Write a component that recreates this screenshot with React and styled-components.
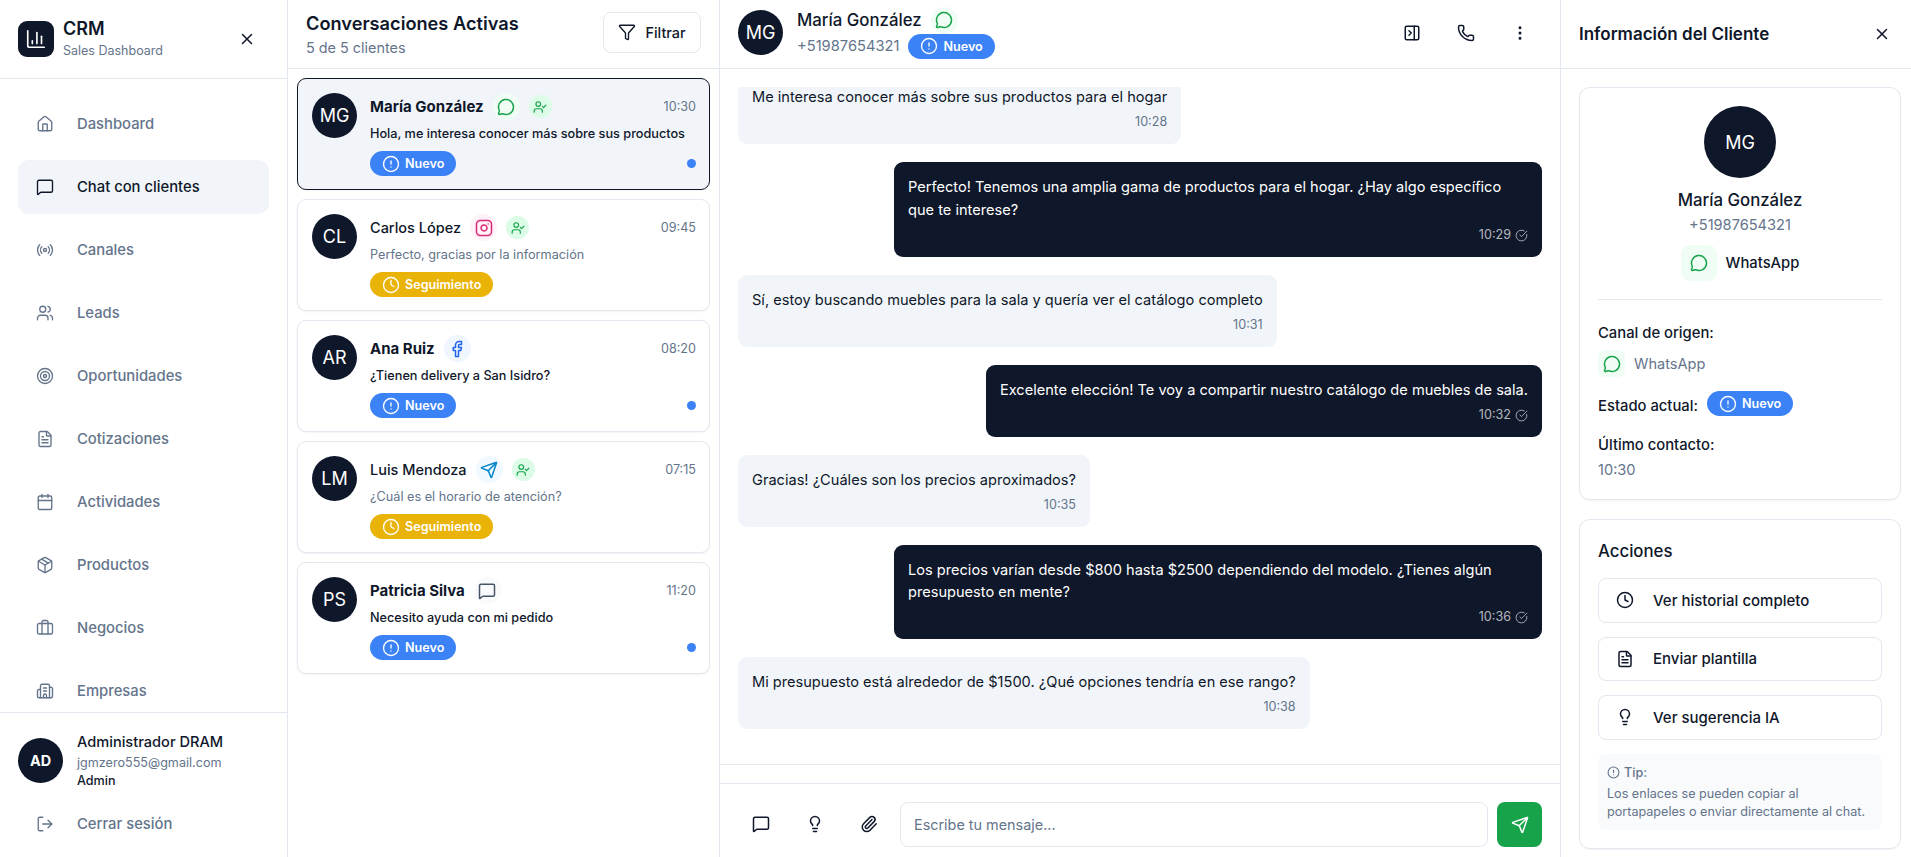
import React from 'react'
import styled, { createGlobalStyle } from 'styled-components'
import {
  House, MessageSquare, Radio, Users, Target, FileText, Calendar, Package, Briefcase, Building2,
  LogOut, X, ChartColumn, Funnel, MessageCircle, UserCheck, Instagram, Facebook, Send,
  CircleAlert, Clock, PanelRightClose, Phone, EllipsisVertical, CircleCheckBig, Lightbulb, Paperclip,
} from 'lucide-react'

const GlobalStyle = createGlobalStyle`
  * { box-sizing: border-box; }
  html, body { margin: 0; padding: 0; height: 100%; }
  body { font-family: Inter, "Noto Sans", sans-serif; color: #0f172a; background: #fff; }
`

const Page = styled.div`
  display: flex;
  width: 100vw;
  height: 100vh;
  overflow: hidden;
`

/* sidebar */
const Sidebar = styled.aside`
  width: 288px;
  flex-shrink: 0;
  display: flex;
  flex-direction: column;
  border-right: 1px solid #e2e8f0;
`
const SideHead = styled.div`
  height: 79px;
  flex-shrink: 0;
  padding: 0 31px 0 18px;
  display: flex;
  align-items: center;
  border-bottom: 1px solid #e2e8f0;
`
const Logo = styled.div`
  width: 36px;
  height: 36px;
  border-radius: 9px;
  background: #0f172a;
  color: #fff;
  display: flex;
  align-items: center;
  justify-content: center;
  margin-right: 9px;
`
const Brand = styled.div`
  flex: 1;
  font-size: 18px;
  font-weight: 600;
  line-height: 24px;
`
const BrandSub = styled.div`
  font-size: 12.5px;
  font-weight: 400;
  line-height: 20px;
  color: #64748b;
`
const IconButton = styled.button`
  border: 0;
  padding: 0;
  background: none;
  color: #0f172a;
  display: flex;
  align-items: center;
  justify-content: center;
  width: ${p => p.$size || 36}px;
  height: ${p => p.$size || 36}px;
`
const Nav = styled.nav`
  flex: 1;
  min-height: 0;
  overflow: hidden;
  padding: 18px 18px 0;
  display: flex;
  flex-direction: column;
  gap: 9px;
`
const NavItem = styled.div`
  height: 54px;
  flex-shrink: 0;
  display: flex;
  align-items: center;
  gap: 23px;
  padding-left: 18px;
  border-radius: 11px;
  font-size: 14.8px;
  font-weight: 500;
  color: ${p => (p.$active ? '#0f172a' : '#64748b')};
  background: ${p => (p.$active ? '#f1f5f9' : 'transparent')};
`
const SideFoot = styled.div`
  flex-shrink: 0;
  height: 145px;
  border-top: 1px solid #e2e8f0;
  padding: 18px 18px 0;
`
const UserRow = styled.div`
  display: flex;
  align-items: center;
  gap: 14px;
`
const Avatar = styled.div`
  width: ${p => p.$size || 45}px;
  height: ${p => p.$size || 45}px;
  border-radius: 50%;
  flex-shrink: 0;
  background: #0f172a;
  color: #fff;
  display: flex;
  align-items: center;
  justify-content: center;
  font-size: ${p => p.$font || 18}px;
  font-weight: ${p => p.$weight || 400};
`
const UserName = styled.div`
  font-size: 14.6px;
  font-weight: 500;
  line-height: 22px;
`
const UserMail = styled.div`
  font-size: 12.6px;
  line-height: 20px;
  color: #64748b;
`
const UserRole = styled.div`
  font-size: 12.6px;
  font-weight: 500;
  line-height: 16px;
`
const Logout = styled(NavItem)`
  height: 36px;
  margin-top: 17px;
`

/* conversation list */
const ListPanel = styled.section`
  width: 432px;
  flex-shrink: 0;
  display: flex;
  flex-direction: column;
  border-right: 1px solid #e2e8f0;
`
const PanelHead = styled.header`
  height: 69px;
  flex-shrink: 0;
  display: flex;
  align-items: center;
  border-bottom: 1px solid #e2e8f0;
  padding: ${p => p.$pad || '0 18px'};
`
const ListTitle = styled.h1`
  margin: 0;
  padding-top: 1px;
  font-size: 18.2px;
  font-weight: 600;
  line-height: 27px;
`
const ListSub = styled.div`
  font-size: 14.4px;
  line-height: 22px;
  color: #64748b;
`
const FilterButton = styled.button`
  margin-left: auto;
  margin-bottom: 4px;
  width: 98px;
  height: 41px;
  border: 1px solid #e2e8f0;
  border-radius: 8px;
  background: #fff;
  color: #0f172a;
  font: 500 14.4px Inter, sans-serif;
  display: flex;
  align-items: center;
  justify-content: center;
  gap: 9px;
`
const Cards = styled.div`
  flex: 1;
  padding: 9px;
  display: flex;
  flex-direction: column;
  gap: 9px;
`
const Card = styled.article`
  height: 112px;
  display: flex;
  gap: 13px;
  padding: 14px 13px 13px 14px;
  border-radius: 9px;
  border: 1px solid ${p => (p.$active ? '#0f172a' : '#e2e8f0')};
  background: ${p => (p.$active ? '#f1f5f9' : '#fff')};
  box-shadow: 0 1px 2px rgba(15, 23, 42, 0.05);
`
const CardBody = styled.div`
  flex: 1;
  min-width: 0;
`
const CardTop = styled.div`
  display: flex;
  align-items: center;
  gap: 9px;
  height: 27px;
`
const CardName = styled.span`
  font-size: ${p => (p.$unread ? 15 : 14.5)}px;
  font-weight: ${p => (p.$unread ? 700 : 500)};
`
const Time = styled.span`
  margin-left: auto;
  font-size: 12.6px;
  color: #64748b;
`
const Circle = styled.span`
  width: ${p => p.$size || 27}px;
  height: ${p => p.$size || 27}px;
  border-radius: 50%;
  flex-shrink: 0;
  display: flex;
  align-items: center;
  justify-content: center;
  background: ${p => p.$bg};
  color: ${p => p.$fg};
`
const Square = styled(Circle)`
  border-radius: ${p => p.$radius || 7}px;
`
const Preview = styled.div`
  margin-top: 4px;
  font-size: 12.7px;
  line-height: 20px;
  font-weight: ${p => (p.$unread ? 500 : 400)};
  color: ${p => (p.$unread ? '#0f172a' : '#64748b')};
  white-space: nowrap;
`
const CardBottom = styled.div`
  margin-top: 7px;
  display: flex;
  align-items: center;
  justify-content: space-between;
`
const Badge = styled.span`
  display: inline-flex;
  align-items: center;
  gap: 5px;
  height: 25px;
  padding: 0 12px;
  border-radius: 999px;
  color: #fff;
  font-size: 12.6px;
  font-weight: 600;
  background: ${p => (p.$kind === 'follow' ? '#eab308' : '#3b82f6')};
`
const Dot = styled.span`
  width: 9px;
  height: 9px;
  border-radius: 50%;
  background: #3b82f6;
`

/* chat */
const ChatPanel = styled.section`
  width: 841px;
  flex-shrink: 0;
  display: flex;
  flex-direction: column;
  border-right: 1px solid #e2e8f0;
`
const ChatTitle = styled.div`
  margin-left: 14px;
  flex: 1;
`
const ChatNameRow = styled.div`
  display: flex;
  align-items: center;
  gap: 9px;
  height: 27px;
  font-size: 16.8px;
  font-weight: 500;
`
const ChatPhoneRow = styled.div`
  display: flex;
  align-items: center;
  gap: 9px;
  font-size: 14.7px;
  color: #64748b;
  height: 25px;
`
const ChatActions = styled.div`
  display: flex;
  gap: 18px;
  margin-right: 4px;
`
const Messages = styled.div`
  flex: 1;
  min-height: 0;
  margin-top: 18px;
  padding: 0 18px 35px;
  overflow: hidden;
  display: flex;
  flex-direction: column;
  justify-content: flex-end;
  gap: 18px;
  border-bottom: 1px solid #e2e8f0;
`
const Bubble = styled.div`
  flex-shrink: 0;
  max-width: 648px;
  align-self: ${p => (p.$mine ? 'flex-end' : 'flex-start')};
  padding: 14px 14px 11.5px;
  border-radius: 9px;
  font-size: 14.6px;
  line-height: 22.5px;
  background: ${p => (p.$mine ? '#0f172a' : '#f1f5f9')};
  color: ${p => (p.$mine ? '#fff' : '#0f172a')};
`
const BubbleMeta = styled.div`
  display: flex;
  align-items: center;
  justify-content: flex-end;
  gap: 4px;
  margin-top: 4px;
  height: 20px;
  font-size: 12.6px;
  color: ${p => (p.$mine ? 'rgba(255, 255, 255, 0.7)' : '#64748b')};
`
const Strip = styled.div`
  height: 19px;
  flex-shrink: 0;
  border-bottom: 1px solid #e2e8f0;
`
const Composer = styled.div`
  height: 73px;
  flex-shrink: 0;
  display: flex;
  align-items: flex-start;
  padding: 18px 18px 0 23px;
`
const ComposerTools = styled.div`
  display: flex;
  width: 157px;
  flex-shrink: 0;
  gap: 18px;
  padding-top: 4px;
  & > button { flex-shrink: 0; }
`
const Input = styled.input`
  flex: 1;
  min-width: 0;
  height: 45px;
  border: 1px solid #e2e8f0;
  border-radius: 8px;
  padding: 0 13px;
  font: 400 14.4px Inter, sans-serif;
  &::placeholder { color: #64748b; }
`
const SendButton = styled.button`
  width: 45px;
  height: 45px;
  margin-left: 9px;
  border: 0;
  border-radius: 8px;
  background: #16a34a;
  color: #fff;
  display: flex;
  align-items: center;
  justify-content: center;
`

/* client info */
const InfoPanel = styled.aside`
  flex: 1;
  min-width: 0;
  display: flex;
  flex-direction: column;
`
const InfoTitle = styled.h2`
  margin: 0;
  flex: 1;
  font-size: 17px;
  font-weight: 600;
`
const InfoBody = styled.div`
  padding: 18px 10px 0 18px;
  display: flex;
  flex-direction: column;
  gap: 19px;
`
const InfoCard = styled.div`
  border: 1px solid #e2e8f0;
  border-radius: 11px;
  padding: 18px;
  box-shadow: 0 1px 2px rgba(15, 23, 42, 0.05);
`
const Center = styled.div`
  display: flex;
  flex-direction: column;
  align-items: center;
  padding-bottom: 18px;
  border-bottom: 1px solid #e2e8f0;
`
const ClientName = styled.div`
  margin-top: 9px;
  font-size: 16.8px;
  font-weight: 500;
  line-height: 27px;
`
const ClientPhone = styled.div`
  font-size: 14.6px;
  line-height: 22px;
  color: #64748b;
`
const ChannelRow = styled.div`
  display: flex;
  align-items: center;
  gap: 9px;
  margin-top: 9px;
  font-size: 14.8px;
  font-weight: 500;
`
const Field = styled.div`
  margin-top: ${p => p.$top || 0}px;
`
const Label = styled.div`
  font-size: 14.8px;
  font-weight: 500;
  line-height: 22px;
`
const FieldValue = styled.div`
  display: flex;
  align-items: center;
  gap: 9px;
  margin-top: ${p => p.$top || 0}px;
  font-size: 14.6px;
  line-height: 22px;
  color: #64748b;
`
const StateRow = styled.div`
  display: flex;
  align-items: flex-start;
  gap: 9px;
  margin-top: 14px;
`
const StateLabel = styled(Label)`
  margin-top: 4px;
`
const ActionsTitle = styled.h3`
  margin: 0 0 13px;
  font-size: 16.8px;
  font-weight: 500;
  line-height: 27px;
`
const ActionList = styled.div`
  display: flex;
  flex-direction: column;
  gap: 14px;
`
const ActionButton = styled.button`
  height: 44.5px;
  display: flex;
  align-items: center;
  gap: 19px;
  padding: 0 17px;
  border: 1px solid #e2e8f0;
  border-radius: 8px;
  background: #fff;
  color: #0f172a;
  font: 500 15px Inter, sans-serif;
`
const Tip = styled.div`
  margin-top: 14px;
  padding: 9px;
  border-radius: 8px;
  background: #f8fafc;
  font-size: 12.6px;
  line-height: 18px;
  color: #64748b;
`
const TipHead = styled.div`
  display: flex;
  align-items: center;
  gap: 4px;
  font-weight: 500;
  line-height: 20px;
  margin-bottom: 2px;
`

const navItems = [
  { label: 'Dashboard', icon: House },
  { label: 'Chat con clientes', icon: MessageSquare, active: true },
  { label: 'Canales', icon: Radio },
  { label: 'Leads', icon: Users },
  { label: 'Oportunidades', icon: Target },
  { label: 'Cotizaciones', icon: FileText },
  { label: 'Actividades', icon: Calendar },
  { label: 'Productos', icon: Package },
  { label: 'Negocios', icon: Briefcase },
  { label: 'Empresas', icon: Building2 },
]

const channels = {
  whatsapp: { icon: MessageCircle, bg: '#f0fdf4', fg: '#16a34a' },
  instagram: { icon: Instagram, bg: '#fdf2f8', fg: '#db2777' },
  facebook: { icon: Facebook, bg: '#eff6ff', fg: '#2563eb' },
  telegram: { icon: Send, bg: '#f0f9ff', fg: '#0284c7' },
  chat: { icon: MessageSquare, bg: '#f8fafc', fg: '#475569' },
}

const conversations = [
  { initials: 'MG', name: 'María González', channel: 'whatsapp', assigned: true, time: '10:30', text: 'Hola, me interesa conocer más sobre sus productos', status: 'new', unread: true, active: true },
  { initials: 'CL', name: 'Carlos López', channel: 'instagram', assigned: true, time: '09:45', text: 'Perfecto, gracias por la información', status: 'follow' },
  { initials: 'AR', name: 'Ana Ruiz', channel: 'facebook', time: '08:20', text: '¿Tienen delivery a San Isidro?', status: 'new', unread: true },
  { initials: 'LM', name: 'Luis Mendoza', channel: 'telegram', assigned: true, time: '07:15', text: '¿Cuál es el horario de atención?', status: 'follow' },
  { initials: 'PS', name: 'Patricia Silva', channel: 'chat', time: '11:20', text: 'Necesito ayuda con mi pedido', status: 'new', unread: true },
]

const messages = [
  { text: 'Me interesa conocer más sobre sus productos para el hogar', time: '10:28' },
  { text: 'Perfecto! Tenemos una amplia gama de productos para el hogar. ¿Hay algo específico que te interese?', time: '10:29', mine: true },
  { text: 'Sí, estoy buscando muebles para la sala y quería ver el catálogo completo', time: '10:31' },
  { text: 'Excelente elección! Te voy a compartir nuestro catálogo de muebles de sala.', time: '10:32', mine: true },
  { text: 'Gracias! ¿Cuáles son los precios aproximados?', time: '10:35' },
  { text: 'Los precios varían desde $800 hasta $2500 dependiendo del modelo. ¿Tienes algún presupuesto en mente?', time: '10:36', mine: true },
  { text: 'Mi presupuesto está alrededor de $1500. ¿Qué opciones tendría en ese rango?', time: '10:38' },
]

function StatusBadge({ status }) {
  const follow = status === 'follow'
  const Icon = follow ? Clock : CircleAlert
  return (
    <Badge $kind={status}>
      <Icon size={18} strokeWidth={1.8} />
      {follow ? 'Seguimiento' : 'Nuevo'}
    </Badge>
  )
}

function ChannelIcon({ channel, size = 18 }) {
  const { icon: Icon, bg, fg } = channels[channel]
  return (
    <Circle $bg={bg} $fg={fg}>
      <Icon size={size} />
    </Circle>
  )
}

export default function App() {
  return (
    <Page>
      <GlobalStyle />
      <Sidebar>
        <SideHead>
          <Logo><ChartColumn size={22} strokeWidth={1.8} /></Logo>
          <Brand>
            CRM
            <BrandSub>Sales Dashboard</BrandSub>
          </Brand>
          <IconButton $size={18}><X size={18} /></IconButton>
        </SideHead>
        <Nav>
          {navItems.map(({ label, icon: Icon, active }) => (
            <NavItem key={label} $active={active}>
              <Icon size={18} strokeWidth={1.8} />
              {label}
            </NavItem>
          ))}
        </Nav>
        <SideFoot>
          <UserRow>
            <Avatar $font={14.4} $weight={700}>AD</Avatar>
            <div>
              <UserName>Administrador DRAM</UserName>
              <UserMail>jgmzero555@gmail.com</UserMail>
              <UserRole>Admin</UserRole>
            </div>
          </UserRow>
          <Logout>
            <LogOut size={18} strokeWidth={1.8} />
            Cerrar sesión
          </Logout>
        </SideFoot>
      </Sidebar>

      <ListPanel>
        <PanelHead>
          <div>
            <ListTitle>Conversaciones Activas</ListTitle>
            <ListSub>5 de 5 clientes</ListSub>
          </div>
          <FilterButton><Funnel size={18} strokeWidth={1.8} />Filtrar</FilterButton>
        </PanelHead>
        <Cards>
          {conversations.map(c => (
            <Card key={c.initials} $active={c.active}>
              <Avatar>{c.initials}</Avatar>
              <CardBody>
                <CardTop>
                  <CardName $unread={c.unread}>{c.name}</CardName>
                  <ChannelIcon channel={c.channel} />
                  {c.assigned && (
                    <Circle $size={23} $bg="#dcfce7" $fg="#16a34a"><UserCheck size={14} /></Circle>
                  )}
                  <Time>{c.time}</Time>
                </CardTop>
                <Preview $unread={c.unread}>{c.text}</Preview>
                <CardBottom>
                  <StatusBadge status={c.status} />
                  {c.unread && <Dot />}
                </CardBottom>
              </CardBody>
            </Card>
          ))}
        </Cards>
      </ListPanel>

      <ChatPanel>
        <PanelHead $pad="0 18px 3px">
          <Avatar>MG</Avatar>
          <ChatTitle>
            <ChatNameRow>María González <ChannelIcon channel="whatsapp" /></ChatNameRow>
            <ChatPhoneRow>+51987654321 <StatusBadge status="new" /></ChatPhoneRow>
          </ChatTitle>
          <ChatActions>
            <IconButton><PanelRightClose size={18} /></IconButton>
            <IconButton><Phone size={18} /></IconButton>
            <IconButton><EllipsisVertical size={18} /></IconButton>
          </ChatActions>
        </PanelHead>
        <Messages>
          {messages.map(m => (
            <Bubble key={m.time} $mine={m.mine}>
              {m.text}
              <BubbleMeta $mine={m.mine}>
                {m.time}
                {m.mine && <CircleCheckBig size={13} strokeWidth={1.6} />}
              </BubbleMeta>
            </Bubble>
          ))}
        </Messages>
        <Strip />
        <Composer>
          <ComposerTools>
            <IconButton><MessageSquare size={18} /></IconButton>
            <IconButton><Lightbulb size={18} /></IconButton>
            <IconButton><Paperclip size={18} /></IconButton>
          </ComposerTools>
          <Input placeholder="Escribe tu mensaje..." />
          <SendButton><Send size={18} /></SendButton>
        </Composer>
      </ChatPanel>

      <InfoPanel>
        <PanelHead $pad="0 11px 0 18px">
          <InfoTitle>Información del Cliente</InfoTitle>
          <IconButton><X size={18} /></IconButton>
        </PanelHead>
        <InfoBody>
          <InfoCard>
            <Center>
              <Avatar $size={72} $font={18}>MG</Avatar>
              <ClientName>María González</ClientName>
              <ClientPhone>+51987654321</ClientPhone>
              <ChannelRow>
                <Square $size={36} $radius={9} $bg="#f0fdf4" $fg="#16a34a"><MessageCircle size={18} /></Square>
                WhatsApp
              </ChannelRow>
            </Center>
            <Field $top={22}>
              <Label>Canal de origen:</Label>
              <FieldValue $top={6}>
                <Square $bg="#f0fdf4" $fg="#16a34a"><MessageCircle size={18} /></Square>
                WhatsApp
              </FieldValue>
            </Field>
            <StateRow>
              <StateLabel>Estado actual:</StateLabel>
              <StatusBadge status="new" />
            </StateRow>
            <Field $top={17}>
              <Label>Último contacto:</Label>
              <FieldValue $top={3}>10:30</FieldValue>
            </Field>
          </InfoCard>
          <InfoCard>
            <ActionsTitle>Acciones</ActionsTitle>
            <ActionList>
              <ActionButton><Clock size={18} />Ver historial completo</ActionButton>
              <ActionButton><FileText size={18} />Enviar plantilla</ActionButton>
              <ActionButton><Lightbulb size={18} />Ver sugerencia IA</ActionButton>
            </ActionList>
            <Tip>
              <TipHead><CircleAlert size={13} />Tip:</TipHead>
              Los enlaces se pueden copiar al portapapeles o enviar directamente al chat.
            </Tip>
          </InfoCard>
        </InfoBody>
      </InfoPanel>
    </Page>
  )
}
